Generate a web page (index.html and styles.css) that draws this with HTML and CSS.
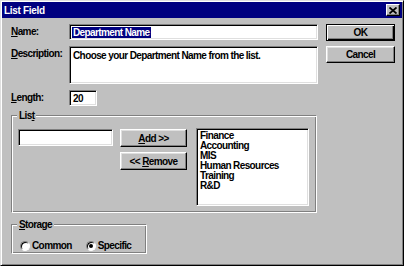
FILE: index.html
```html
<!DOCTYPE html>
<html>
<head>
<meta charset="utf-8">
<link rel="stylesheet" href="styles.css">
</head>
<body>
<div class="window">
  <div class="titlebar">
    <span class="title">List Field</span>
    <span class="close"><svg width="8" height="7" viewBox="0 0 8 7"><path d="M0.5 0.5 L7.5 6.5 M7.5 0.5 L0.5 6.5" stroke="#000" stroke-width="1.8" fill="none"/></svg></span>
  </div>
  <div class="content">
    <div class="top">
      <div class="form">
        <div class="row"><span class="label"><u>N</u>ame:</span><div class="field name"><span class="sel">Department Name</span></div></div>
        <div class="row"><span class="label"><u>D</u>escription:</span><div class="field desc">Choose your Department Name from the list.</div></div>
        <div class="row"><span class="label"><u>L</u>ength:</span><div class="field len">20</div></div>
      </div>
      <div class="actions">
        <div class="btn default"><span>OK</span></div>
        <div class="btn"><span>Cancel</span></div>
      </div>
    </div>
    <div class="group listgroup">
      <span class="legend">Lis<u>t</u></span>
      <div class="field entry"></div>
      <div class="listbtns">
        <div class="btn small"><span><u>A</u>dd &gt;&gt;</span></div>
        <div class="btn small"><span>&lt;&lt; <u>R</u>emove</span></div>
      </div>
      <div class="field listbox">
        <div>Finance</div>
        <div>Accounting</div>
        <div>MIS</div>
        <div>Human Resources</div>
        <div>Training</div>
        <div>R&amp;D</div>
      </div>
    </div>
    <div class="group storage">
      <span class="legend"><u>S</u>torage</span>
      <div class="radio-item"><span class="radio"></span><span>Common</span></div>
      <div class="radio-item"><span class="radio checked"></span><span>Specific</span></div>
    </div>
  </div>
</div>
</body>
</html>
```

FILE: styles.css
```css
* { box-sizing: border-box; }
html, body { margin: 0; padding: 0; }
body {
  width: 404px;
  height: 266px;
  overflow: hidden;
  font: bold 10px "Liberation Sans", Arial, sans-serif;
  letter-spacing: -0.6px;
  color: #000;
  background: #c0c0c0;
}
.window {
  width: 404px;
  height: 266px;
  background: #c0c0c0;
  border: 1px solid;
  border-color: #dfdfdf #000 #000 #dfdfdf;
  box-shadow: inset 1px 1px 0 #fff, inset -1px -1px 0 #808080;
  padding: 1px;
  display: flex;
  flex-direction: column;
}
.titlebar {
  height: 16px;
  background: #000080;
  color: #fff;
  display: flex;
  align-items: center;
  padding: 0 2px 0 2px;
}
.title { font-size: 10px; letter-spacing: -0.3px; }
.close {
  margin-left: auto;
  width: 14px;
  height: 12px;
  background: #c0c0c0;
  border: 1px solid;
  border-color: #fff #000 #000 #fff;
  box-shadow: inset -1px -1px 0 #808080;
  display: flex;
  align-items: center;
  justify-content: center;
}
.close svg { display: block; }
.content {
  padding: 6px 0 0 9px;
  display: flex;
  flex-direction: column;
}
.top { display: flex; }
.form { display: flex; flex-direction: column; gap: 6px; }
.row { display: flex; align-items: flex-start; }
.label { width: 58px; line-height: 16px; }
.field {
  background: #fff;
  border: 1px solid;
  border-color: #808080 #fff #fff #808080;
  box-shadow: inset 1px 1px 0 #000, inset -1px -1px 0 #dfdfdf;
}
.name { width: 249px; height: 16px; padding: 2px 0 0 2px; line-height: 11px; }
.sel { background: #000080; color: #fff; display: inline-block; padding: 0 1px; }
.desc { width: 249px; height: 38px; padding: 3px 0 0 3px; line-height: 11px; }
.len { width: 28px; height: 16px; padding: 2px 0 0 3px; line-height: 11px; }
.actions { margin-left: 8px; display: flex; flex-direction: column; gap: 5px; }
.btn {
  width: 69px;
  height: 17px;
  border: 1px solid;
  border-color: #fff #000 #000 #fff;
  box-shadow: inset -1px -1px 0 #808080, inset 1px 1px 0 #dfdfdf;
  display: flex;
  align-items: center;
  justify-content: center;
  line-height: 11px;
}
.btn.default {
  border: 1px solid #000;
  box-shadow: inset 1px 1px 0 #fff, inset -1px -1px 0 #000, inset -2px -2px 0 #808080;
}
.group {
  position: relative;
  border: 1px solid;
  border-color: #808080 #fff #fff #808080;
  box-shadow: inset 1px 1px 0 #fff, inset -1px -1px 0 #808080;
}
.legend {
  position: absolute;
  top: -6px;
  left: 5px;
  padding: 0 2px;
  background: #c0c0c0;
  line-height: 11px;
}
.listgroup {
  margin-top: 9px;
  width: 306px;
  height: 98px;
  padding: 12px 0 0 6px;
  display: flex;
  align-items: flex-start;
}
.entry { width: 95px; height: 17px; margin-top: 1px; }
.listbtns { margin-left: 7px; margin-top: 1px; display: flex; flex-direction: column; gap: 5px; }
.btn.small { width: 67px; height: 18px; }
.listbox {
  margin-left: 9px;
  width: 113px;
  height: 78px;
  padding: 2px 0 0 3px;
  line-height: 10px;
}
.storage {
  margin-top: 11px;
  width: 136px;
  height: 30px;
  padding: 13px 0 0 8px;
  display: flex;
  align-items: center;
}
.radio-item { display: flex; align-items: center; line-height: 11px; }
.radio-item + .radio-item { margin-left: 14px; }
.radio {
  width: 10px;
  height: 10px;
  border-radius: 50%;
  background: #fff;
  border: 1px solid;
  border-color: #808080 #fff #fff #808080;
  box-shadow: inset 1px 1px 0 #000;
  margin-right: 2px;
  position: relative;
}
.radio.checked::after {
  content: "";
  position: absolute;
  left: 2px;
  top: 2px;
  width: 4px;
  height: 4px;
  border-radius: 50%;
  background: #000;
}
```
